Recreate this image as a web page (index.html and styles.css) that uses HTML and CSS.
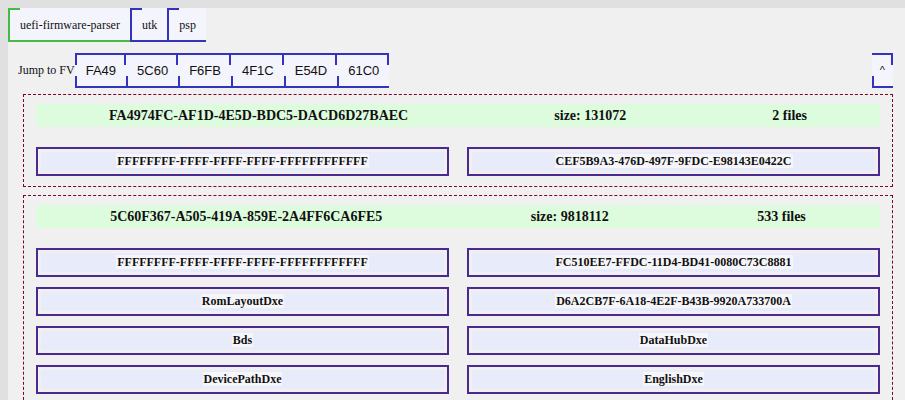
FILE: index.html
```html
<!DOCTYPE html>
<html>
<head>
<meta charset="utf-8">
<title>Firmware</title>
<link rel="stylesheet" href="styles.css">
</head>
<body>
<div class="tabs">
  <div class="tab tab-active">uefi-firmware-parser</div>
  <div class="tab">utk</div>
  <div class="tab">psp</div>
</div>
<div class="jump">
  <span class="jump-label">Jump to FV</span>
  <div class="jump-btns">
    <span class="jbtn jbtn-first">FA49</span>
    <span class="jbtn">5C60</span>
    <span class="jbtn">F6FB</span>
    <span class="jbtn">4F1C</span>
    <span class="jbtn">E54D</span>
    <span class="jbtn">61C0</span>
  </div>
  <span class="jbtn jbtn-up">^</span>
</div>
<div class="fvs">
  <section class="fv">
    <div class="fv-head">
      <span>FA4974FC-AF1D-4E5D-BDC5-DACD6D27BAEC</span>
      <span>size: 131072</span>
      <span>2 files</span>
    </div>
    <div class="files">
      <div class="file"><div class="file-inner"><span>FFFFFFFF-FFFF-FFFF-FFFF-FFFFFFFFFFFF</span></div></div>
      <div class="file"><div class="file-inner"><span>CEF5B9A3-476D-497F-9FDC-E98143E0422C</span></div></div>
    </div>
  </section>
  <section class="fv">
    <div class="fv-head">
      <span>5C60F367-A505-419A-859E-2A4FF6CA6FE5</span>
      <span>size: 9818112</span>
      <span>533 files</span>
    </div>
    <div class="files">
      <div class="file"><div class="file-inner"><span>FFFFFFFF-FFFF-FFFF-FFFF-FFFFFFFFFFFF</span></div></div>
      <div class="file"><div class="file-inner"><span>FC510EE7-FFDC-11D4-BD41-0080C73C8881</span></div></div>
      <div class="file"><div class="file-inner"><span>RomLayoutDxe</span></div></div>
      <div class="file"><div class="file-inner"><span>D6A2CB7F-6A18-4E2F-B43B-9920A733700A</span></div></div>
      <div class="file"><div class="file-inner"><span>Bds</span></div></div>
      <div class="file"><div class="file-inner"><span>DataHubDxe</span></div></div>
      <div class="file"><div class="file-inner"><span>DevicePathDxe</span></div></div>
      <div class="file"><div class="file-inner"><span>EnglishDxe</span></div></div>
    </div>
  </section>
</div>
</body>
</html>
```
FILE: styles.css
```css
html {
  background: #e0e0e0;
}
body {
  margin: 8px 0 0 8px;
  background: #f0f0f0;
  font-family: "Liberation Serif", serif;
  color: #111;
  min-height: 392px;
}
.tabs {
  display: flex;
}
.tab {
  font-size: 12px;
  line-height: 14px;
  padding: 10px 10px 8px 10px;
  background-color: #f4f4fc;
  border-left: 2px solid #3333bb;
  border-bottom: 2px solid #3333bb;
  background-image: linear-gradient(#3333bb, #3333bb);
  background-repeat: no-repeat;
  background-origin: border-box;
  background-position: left top;
  background-size: 12px 2px;
}
.tab-active {
  border-color: #44bb44;
  background-image: linear-gradient(#44bb44, #44bb44);
}
.jump {
  display: flex;
  align-items: center;
  margin-top: 11px;
  padding: 0 12px 0 10px;
}
.jump-label {
  font-size: 12px;
}
.jump-btns {
  display: flex;
}
.jbtn {
  font-family: "Liberation Sans", Arial, sans-serif;
  font-size: 13px;
  line-height: 31px;
  height: 31px;
  padding: 0 10px 0 11px;
  background-color: #f4f4fc;
  border-top: 2px solid #3333bb;
  border-bottom: 2px solid #3333bb;
  background-image: linear-gradient(#3333bb, #3333bb), linear-gradient(#3333bb, #3333bb);
  background-repeat: no-repeat;
  background-origin: border-box;
  background-clip: border-box;
  background-position: right top, left bottom;
  background-size: 2px 12px, 2px 12px;
}
.jbtn-first {
  background-image: linear-gradient(#3333bb, #3333bb), linear-gradient(#3333bb, #3333bb), linear-gradient(#3333bb, #3333bb);
  background-position: right top, left bottom, left top;
  background-size: 2px 12px, 2px 12px, 2px 12px;
}
.jbtn-up {
  margin-left: auto;
  font-size: 11px;
  padding: 0 8px;
}
.fvs {
  padding: 6px 12px 0 15px;
}
.fv {
  border: 1px dashed #800030;
  padding: 9px 12px 10px 12px;
  margin-bottom: 8px;
}
.fv-head {
  display: flex;
  justify-content: space-around;
  align-items: center;
  background: #ddfcdd;
  height: 23px;
  font-weight: bold;
  font-size: 14px;
  margin-bottom: 20px;
}
.files {
  display: grid;
  grid-template-columns: 1fr 1fr;
  column-gap: 18px;
  row-gap: 10px;
}
.file {
  border: 2px solid #4a2a90;
  padding: 3px;
}
.file-inner {
  background: #e8ebfa;
  text-align: center;
  padding: 2px 0;
  font-weight: bold;
  font-size: 12px;
  line-height: 15px;
}
.file-inner span {
  background: #f6f6fa;
  padding: 0 1px;
}
```
